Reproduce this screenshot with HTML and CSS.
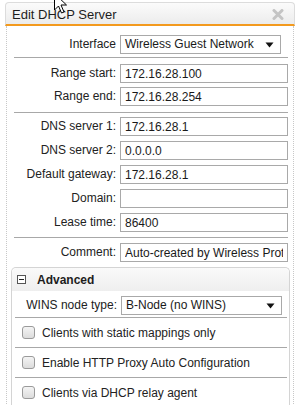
FILE: index.html
```html
<!DOCTYPE html>
<html>
<head>
<meta charset="utf-8">
<link rel="stylesheet" href="styles.css">
</head>
<body>
<div class="dialog">
  <div class="dlg-head">
    <span class="dlg-title">Edit DHCP Server</span>
    <svg class="dlg-close" width="12" height="11" viewBox="0 0 12 11"><path d="M2 1.5 L10 9.5 M10 1.5 L2 9.5" stroke="#c4c4c4" stroke-width="3" stroke-linecap="round"/></svg>
  </div>
  <div class="dlg-body">
    <div class="section s1">
      <div class="row"><label class="lbl">Interface</label><div class="select">Wireless Guest Network<svg class="caret" width="9" height="6" viewBox="0 0 9 6"><path d="M0.5 0.5 H8.5 L4.5 5.5 Z" fill="#111"/></svg></div></div>
    </div>
    <div class="section s2">
      <div class="row r23"><label class="lbl">Range start:</label><input class="field" value="172.16.28.100"></div>
      <div class="row r23"><label class="lbl">Range end:</label><input class="field" value="172.16.28.254"></div>
    </div>
    <div class="section s3">
      <div class="row"><label class="lbl">DNS server 1:</label><input class="field" value="172.16.28.1"></div>
      <div class="row"><label class="lbl">DNS server 2:</label><input class="field" value="0.0.0.0"></div>
      <div class="row"><label class="lbl">Default gateway:</label><input class="field" value="172.16.28.1"></div>
      <div class="row"><label class="lbl">Domain:</label><input class="field" value=""></div>
      <div class="row"><label class="lbl">Lease time:</label><input class="field" value="86400"></div>
    </div>
    <div class="section s4">
      <div class="row"><label class="lbl">Comment:</label><input class="field" value="Auto-created by Wireless Protection"></div>
    </div>
    <div class="adv">
      <div class="adv-head">
        <svg class="toggle" width="9" height="9" viewBox="0 0 9 9"><rect x="0.5" y="0.5" width="8" height="8" fill="#fff" stroke="#555"/><path d="M2 4.5 H7" stroke="#222"/></svg>
        <span class="adv-title">Advanced</span>
      </div>
      <div class="adv-body">
        <div class="section s5">
          <div class="row r23"><label class="lbl">WINS node type:</label><div class="select">B-Node (no WINS)<svg class="caret" width="9" height="6" viewBox="0 0 9 6"><path d="M0.5 0.5 H8.5 L4.5 5.5 Z" fill="#111"/></svg></div></div>
        </div>
        <div class="check-row"><span class="cb"></span><span>Clients with static mappings only</span></div>
        <div class="check-row"><span class="cb"></span><span>Enable HTTP Proxy Auto Configuration</span></div>
        <div class="check-row"><span class="cb"></span><span>Clients via DHCP relay agent</span></div>
      </div>
    </div>
  </div>
</div>
<svg class="cursor" width="14" height="22" viewBox="0 0 14 22"><path d="M0.5 0.5 V17 L4.5 13 L7.5 20 L10 19 L7 12 H12.5 Z" fill="#fff" stroke="#000" stroke-width="1"/></svg>
</body>
</html>
```
FILE: styles.css
```css
html, body {
  margin: 0;
  padding: 0;
  background: #fff;
  width: 298px;
  height: 405px;
  overflow: hidden;
  position: relative;
  font-family: "Liberation Sans", Arial, sans-serif;
  font-size: 12px;
  color: #222;
}
.dialog {
  margin: 2px 0 0 5px;
  width: 290px;
}
.dlg-head {
  height: 21px;
  border: 1px solid #dcdcdc;
  border-bottom: 2px solid #f39a1e;
  border-radius: 4px 4px 0 0;
  background: linear-gradient(#fbfbfb, #ececec);
  display: flex;
  align-items: center;
  justify-content: space-between;
  padding: 0 10px 0 6px;
}
.dlg-title {
  font-size: 13px;
  color: #1d1d1d;
  padding-top: 1px;
}
.dlg-close {
  margin-top: 1px;
}
.dlg-body {
  margin: 0 1px;
  border-left: 1px dotted #c8c8c8;
  border-right: 1px dotted #c8c8c8;
  padding: 0 5px 0 7px;
}
.section {
  border-bottom: 1px solid #a8a8a8;
}
.s1 { padding: 7px 0 0; }
.s2 { padding: 4px 0 4px; }
.s3 { padding: 2px 0 2px; }
.s4 { padding: 3px 0 2px; border-bottom: none; }
.row {
  display: flex;
  height: 24px;
  padding-top: 2px;
  box-sizing: border-box;
  align-items: flex-start;
}
.row.r23 {
  height: 23px;
}
.lbl {
  width: 102px;
  text-align: right;
  line-height: 19px;
  padding-right: 4px;
  color: #222;
  white-space: nowrap;
}
.field {
  width: 168px;
  height: 19px;
  box-sizing: border-box;
  border: 1px solid #a9a9a9;
  padding: 0 4px;
  margin: 0;
  font: inherit;
  color: #1a1a1a;
  outline: none;
  background: #fff;
}
.select {
  position: relative;
  width: 161px;
  height: 19px;
  box-sizing: border-box;
  border: 1px solid #a9a9a9;
  padding: 0 4px;
  line-height: 17px;
  color: #1a1a1a;
  background: #fff;
}
.caret {
  position: absolute;
  right: 6px;
  top: 6px;
}
.adv {
  margin: 0 -2px 0 -3px;
  border: 1px solid #d4d4d4;
  border-bottom: none;
  border-radius: 5px 5px 0 0;
}
.adv-head {
  height: 23px;
  display: flex;
  align-items: center;
  padding-left: 5px;
  background: linear-gradient(#fafafa, #eeeeee);
  border-radius: 5px 5px 0 0;
}
.toggle {
  margin-right: 11px;
}
.adv-title {
  font-weight: bold;
  color: #1d1d1d;
}
.adv-body {
  padding: 0 2px 0 3px;
}
.s5 { padding: 3px 0 0; }
.check-row {
  height: 29px;
  display: flex;
  align-items: center;
  border-bottom: 1px solid #a8a8a8;
  padding-left: 7px;
  color: #222;
}
.cb {
  width: 11px;
  height: 11px;
  border: 1px solid #9a9a9a;
  border-radius: 3px;
  background: linear-gradient(#f4f4f4, #dcdcdc);
  margin-right: 7px;
}
.cursor {
  position: absolute;
  left: 54px;
  top: -7px;
}
```
